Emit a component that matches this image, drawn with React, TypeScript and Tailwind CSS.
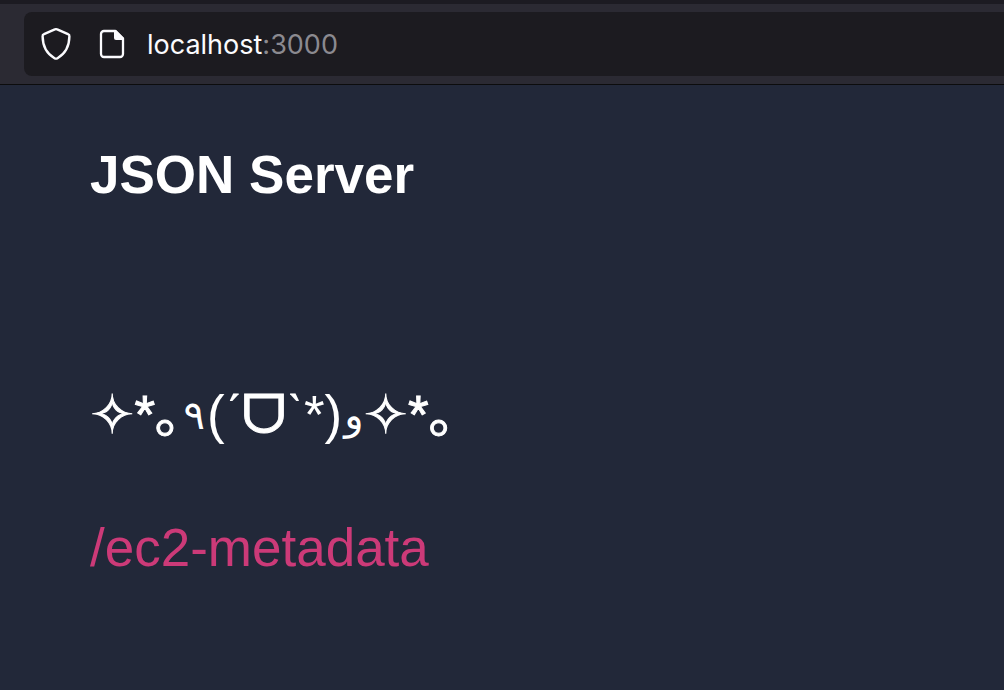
function ShieldIcon() {
  return (
    <svg viewBox="0 0 32 34" className="h-[34px] w-8" fill="none" stroke="#fbfbfe" strokeWidth="2.4" strokeLinejoin="round" aria-hidden="true">
      <path d="M14.800 2.400a2.600 2.600 0 0 1 2.400 0L28 7.200a2 2 0 0 1 1.400 2.100C29.300 18 26.500 26 17.500 31.200a3 3 0 0 1-3 0C5.500 26 2.700 18 2.600 9.300A2 2 0 0 1 4 7.200z" />
    </svg>
  );
}

function PageIcon() {
  return (
    <svg viewBox="0 0 26 30" className="h-[30px] w-[26px]" aria-hidden="true">
      <path d="M5 2h11.500L24 9.500V25a3 3 0 0 1-3 3H5a3 3 0 0 1-3-3V5a3 3 0 0 1 3-3z" fill="none" stroke="#fbfbfe" strokeWidth="2.300" strokeLinejoin="round" />
      <path d="M15 1h2l8 8v2h-8a2 2 0 0 1-2-2z" fill="#fbfbfe" />
    </svg>
  );
}

function AddressBar() {
  return (
    <header className="border-t-4 border-b border-t-[#1c1b22] border-b-[#0c0c0d] bg-[#2b2a33] py-2 pl-6">
      <div className="flex h-16 items-center rounded-l-lg bg-[#1c1b20] pl-4">
        <button type="button" aria-label="Tracking protection">
          <ShieldIcon />
        </button>
        <button type="button" aria-label="Site information" className="ml-[27px]">
          <PageIcon />
        </button>
        <a href="http://localhost:3000" className="ml-[22px] pt-0.5 font-['Inter',sans-serif] text-[27px] leading-8 text-[#fbfbfe]">
          localhost<span className="text-[#8b8a90]">:3000</span>
        </a>
      </div>
    </header>
  );
}

function Kaomoji() {
  return (
    <p dir="ltr" className="flex h-16 items-center font-['Liberation_Sans','DejaVu_Sans','Noto_Sans_CJK_JP',sans-serif] text-[53px] leading-[64px] whitespace-nowrap">
      <span className="[-webkit-text-stroke:1px_white]">✧*｡</span>
      <span className="px-0.5 text-[40px]">٩</span>
      <span>
        (ˊ<span className="[-webkit-text-stroke:1px_white]">ᗜ</span>ˋ*)
      </span>
      <span className="pl-0.5 text-[40px]">و</span>
      <span className="[-webkit-text-stroke:1px_white]">✧*｡</span>
    </p>
  );
}

export default function App() {
  return (
    <div className="flex min-h-screen flex-col bg-[#222839] font-['Liberation_Sans',sans-serif] text-white">
      <AddressBar />
      <main className="flex-1 px-[90px] pt-[58px] text-[53px] leading-[64px]">
        <h1 className="font-bold">JSON Server</h1>
        <div className="mt-44">
          <Kaomoji />
        </div>
        <nav className="mt-[69px]">
          <a href="/ec2-metadata" className="text-[#cc3a78]">
            /ec2-metadata
          </a>
        </nav>
      </main>
    </div>
  );
}
